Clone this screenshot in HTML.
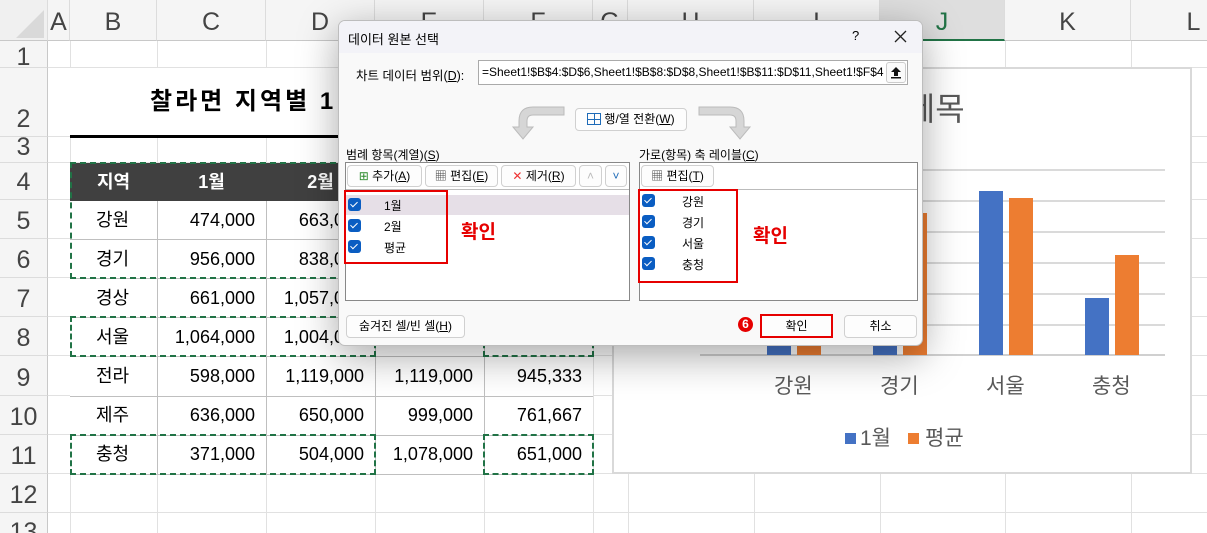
<!DOCTYPE html>
<html><head><meta charset="utf-8">
<style>
*{margin:0;padding:0;box-sizing:border-box}
html,body{width:1207px;height:533px;overflow:hidden}
body{background:#fff;position:relative;font-family:"Liberation Sans","Noto Sans CJK KR",sans-serif;color:#000}
.a{position:absolute}
.ch{position:absolute;top:0;height:41px;background:#f5f5f5;border-right:1px solid #dcdcdc;border-bottom:1px solid #c8c8c8;font-size:25px;color:#444;text-align:center;line-height:44px}
.rh{position:absolute;left:0;width:48px;background:#f5f5f5;border-right:1px solid #c8c8c8;border-bottom:1px solid #dcdcdc;font-size:25px;color:#444;text-align:center;display:flex;align-items:flex-end;justify-content:center;padding-bottom:2px}
.vl{position:absolute;top:41px;bottom:0;width:1px;background:#e1e1e1}
.hl{position:absolute;left:48px;right:0;height:1px;background:#e1e1e1}
.c{position:absolute;font-size:18px;line-height:20px;white-space:nowrap}
.r{text-align:right}
.dash{position:absolute;border:2px dashed #217346}
.dlg{position:absolute;left:338px;top:20px;width:585px;height:326px;background:#f9f9f9;border:1px solid #bdbdbd;border-radius:7px;box-shadow:0 10px 40px rgba(0,0,0,.35);font-size:12px;overflow:hidden}
.btn{position:absolute;background:#fdfdfd;border:1px solid #d0d0d0;border-radius:4px;font-size:12px;text-align:center;line-height:21px;white-space:nowrap}
.cb{position:absolute;width:13px;height:13px;background:#0a5dc2;border-radius:3px}
.cb:after{content:"";position:absolute;left:4px;top:2px;width:3px;height:6px;border:solid #fff;border-width:0 1px 1px 0;transform:rotate(45deg)}
.it{position:absolute;font-size:12px}
.red{position:absolute;border:2px solid #e60000}
.rt{position:absolute;color:#e60000;font-weight:bold;font-size:19px}
.gl{position:absolute;left:700px;width:465px;height:2px;background:#dadada}
.bar{position:absolute}
</style></head><body>
<div class="ch" style="left:0;width:48px;background:#f0f0f0"></div>
<svg class="a" style="left:10px;top:6px" width="36" height="34"><polygon points="34,4 34,32 6,32" fill="#d9d9d9"/></svg>
<div class="ch" style="left:48px;width:22px">A</div>
<div class="ch" style="left:70px;width:87px">B</div>
<div class="ch" style="left:157px;width:109px">C</div>
<div class="ch" style="left:266px;width:109px">D</div>
<div class="ch" style="left:375px;width:109px">E</div>
<div class="ch" style="left:484px;width:109px">F</div>
<div class="ch" style="left:593px;width:35px">G</div>
<div class="ch" style="left:628px;width:126px">H</div>
<div class="ch" style="left:754px;width:126px">I</div>
<div class="ch" style="left:880px;width:125px;background:#dedede;border-bottom:2px solid #217346;color:#217346">J</div>
<div class="ch" style="left:1005px;width:126px">K</div>
<div class="ch" style="left:1131px;width:126px">L</div>
<div class="rh" style="top:41px;height:27px;padding-bottom:0;line-height:20px">1</div>
<div class="rh" style="top:68px;height:69px">2</div>
<div class="rh" style="top:137px;height:26px;padding-bottom:0">3</div>
<div class="rh" style="top:163px;height:37px">4</div>
<div class="rh" style="top:200px;height:39px">5</div>
<div class="rh" style="top:239px;height:39px">6</div>
<div class="rh" style="top:278px;height:39px">7</div>
<div class="rh" style="top:317px;height:39px">8</div>
<div class="rh" style="top:356px;height:40px">9</div>
<div class="rh" style="top:396px;height:39px">10</div>
<div class="rh" style="top:435px;height:39px">11</div>
<div class="rh" style="top:474px;height:39px">12</div>
<div class="rh" style="top:513px;height:39px;align-items:flex-start;padding-top:5px">13</div>
<div class="vl" style="left:70px"></div><div class="vl" style="left:157px"></div><div class="vl" style="left:266px"></div><div class="vl" style="left:375px"></div><div class="vl" style="left:484px"></div><div class="vl" style="left:593px"></div><div class="vl" style="left:628px"></div><div class="vl" style="left:754px"></div><div class="vl" style="left:880px"></div><div class="vl" style="left:1005px"></div><div class="vl" style="left:1131px"></div>
<div class="hl" style="top:67px"></div><div class="hl" style="top:136px"></div><div class="hl" style="top:162px"></div><div class="hl" style="top:199px"></div><div class="hl" style="top:238px"></div><div class="hl" style="top:277px"></div><div class="hl" style="top:316px"></div><div class="hl" style="top:355px"></div><div class="hl" style="top:395px"></div><div class="hl" style="top:434px"></div><div class="hl" style="top:473px"></div><div class="hl" style="top:512px"></div>
<div class="a" style="left:70px;top:68px;width:523px;height:68px;background:#fff"></div>
<div class="c" style="left:150px;top:88px;font-size:24px;font-weight:bold;line-height:28px;letter-spacing:3px">찰라면 지역별 1</div>
<div class="a" style="left:70px;top:135px;width:523px;height:3px;background:#000"></div>
<div class="a" style="left:70px;top:163px;width:523px;height:38px;background:#404040"></div>
<div class="a" style="left:70px;top:201px;width:523px;height:273px;background:#fff"></div>
<div class="a" style="left:157px;top:201px;width:1px;height:273px;background:#bfbfbf"></div>
<div class="a" style="left:266px;top:201px;width:1px;height:273px;background:#bfbfbf"></div>
<div class="a" style="left:375px;top:201px;width:1px;height:273px;background:#bfbfbf"></div>
<div class="a" style="left:484px;top:201px;width:1px;height:273px;background:#bfbfbf"></div>
<div class="a" style="left:70px;top:239px;width:523px;height:1px;background:#bfbfbf"></div>
<div class="a" style="left:70px;top:278px;width:523px;height:1px;background:#bfbfbf"></div>
<div class="a" style="left:70px;top:317px;width:523px;height:1px;background:#bfbfbf"></div>
<div class="a" style="left:70px;top:356px;width:523px;height:1px;background:#bfbfbf"></div>
<div class="a" style="left:70px;top:396px;width:523px;height:1px;background:#bfbfbf"></div>
<div class="a" style="left:70px;top:435px;width:523px;height:1px;background:#bfbfbf"></div>
<div class="a" style="left:70px;top:474px;width:523px;height:1px;background:#bfbfbf"></div>
<div class="c" style="left:70px;width:87px;top:172px;text-align:center;color:#fff;font-weight:bold">지역</div>
<div class="c" style="left:157px;width:109px;top:172px;text-align:center;color:#fff;font-weight:bold">1월</div>
<div class="c" style="left:266px;width:109px;top:172px;text-align:center;color:#fff;font-weight:bold">2월</div>
<div class="c" style="left:375px;width:109px;top:172px;text-align:center;color:#fff;font-weight:bold">3월</div>
<div class="c" style="left:484px;width:109px;top:172px;text-align:center;color:#fff;font-weight:bold">평균</div>
<div class="c" style="left:96px;top:210px">강원</div><div class="c r" style="left:157px;width:98px;top:210px">474,000</div><div class="c r" style="left:266px;width:98px;top:210px">663,000</div>
<div class="c" style="left:96px;top:249px">경기</div><div class="c r" style="left:157px;width:98px;top:249px">956,000</div><div class="c r" style="left:266px;width:98px;top:249px">838,000</div>
<div class="c" style="left:96px;top:288px">경상</div><div class="c r" style="left:157px;width:98px;top:288px">661,000</div><div class="c r" style="left:266px;width:98px;top:288px">1,057,000</div>
<div class="c" style="left:96px;top:327px">서울</div><div class="c r" style="left:157px;width:98px;top:327px">1,064,000</div><div class="c r" style="left:266px;width:98px;top:327px">1,004,000</div>
<div class="c" style="left:96px;top:366px">전라</div><div class="c r" style="left:157px;width:98px;top:366px">598,000</div><div class="c r" style="left:266px;width:98px;top:366px">1,119,000</div><div class="c r" style="left:375px;width:98px;top:366px">1,119,000</div><div class="c r" style="left:484px;width:98px;top:366px">945,333</div>
<div class="c" style="left:96px;top:405px">제주</div><div class="c r" style="left:157px;width:98px;top:405px">636,000</div><div class="c r" style="left:266px;width:98px;top:405px">650,000</div><div class="c r" style="left:375px;width:98px;top:405px">999,000</div><div class="c r" style="left:484px;width:98px;top:405px">761,667</div>
<div class="c" style="left:96px;top:444px">충청</div><div class="c r" style="left:157px;width:98px;top:444px">371,000</div><div class="c r" style="left:266px;width:98px;top:444px">504,000</div><div class="c r" style="left:375px;width:98px;top:444px">1,078,000</div><div class="c r" style="left:484px;width:98px;top:444px">651,000</div>
<div class="dash" style="left:70px;top:162px;width:306px;height:117px"></div>
<div class="dash" style="left:70px;top:316px;width:306px;height:41px"></div>
<div class="dash" style="left:70px;top:434px;width:306px;height:41px"></div>
<div class="dash" style="left:483px;top:162px;width:111px;height:117px"></div>
<div class="dash" style="left:483px;top:316px;width:111px;height:41px"></div>
<div class="dash" style="left:483px;top:434px;width:111px;height:41px"></div>
<div class="a" style="left:612px;top:67px;width:580px;height:407px;background:#fff;border:2px solid #d9d9d9"></div>
<div class="c" style="left:838px;top:90px;font-size:32px;line-height:38px;color:#595959">차트 제목</div>
<div class="gl" style="top:169px"></div><div class="gl" style="top:200px"></div><div class="gl" style="top:231px"></div><div class="gl" style="top:262px"></div><div class="gl" style="top:293px"></div><div class="gl" style="top:324px"></div><div class="gl" style="top:354px;background:#d0d0d0"></div>
<div class="bar" style="left:767px;top:255px;width:24px;height:100px;background:#4472c4"></div>
<div class="bar" style="left:797px;top:230px;width:24px;height:125px;background:#ed7d31"></div>
<div class="bar" style="left:873px;top:235px;width:24px;height:120px;background:#4472c4"></div>
<div class="bar" style="left:903px;top:213px;width:24px;height:142px;background:#ed7d31"></div>
<div class="bar" style="left:979px;top:191px;width:24px;height:164px;background:#4472c4"></div>
<div class="bar" style="left:1009px;top:198px;width:24px;height:157px;background:#ed7d31"></div>
<div class="bar" style="left:1085px;top:298px;width:24px;height:57px;background:#4472c4"></div>
<div class="bar" style="left:1115px;top:255px;width:24px;height:100px;background:#ed7d31"></div>
<div class="c" style="left:774px;top:375px;font-size:21px;line-height:24px;color:#595959">강원</div>
<div class="c" style="left:880px;top:375px;font-size:21px;line-height:24px;color:#595959">경기</div>
<div class="c" style="left:986px;top:375px;font-size:21px;line-height:24px;color:#595959">서울</div>
<div class="c" style="left:1092px;top:375px;font-size:21px;line-height:24px;color:#595959">충청</div>
<div class="a" style="left:845px;top:433px;width:11px;height:11px;background:#4472c4"></div>
<div class="c" style="left:860px;top:427px;font-size:21px;line-height:24px;color:#595959">1월</div>
<div class="a" style="left:908px;top:433px;width:11px;height:11px;background:#ed7d31"></div>
<div class="c" style="left:925px;top:427px;font-size:21px;line-height:24px;color:#595959">평균</div>
<div class="dlg">
 <div class="a" style="left:0;top:0;width:585px;height:32px;background:#f3f3f8"></div>
 <div class="a" style="left:9px;top:8px;font-size:13px">데이터 원본 선택</div>
 <div class="a" style="left:513px;top:7px;font-size:13px">?</div>
 <svg class="a" style="left:555px;top:9px" width="13" height="13"><path d="M1 1L12 12M12 1L1 12" stroke="#222" stroke-width="1.3"/></svg>
 <div class="a" style="left:17px;top:44px;font-size:12.5px">차트 데이터 범위(<u>D</u>):</div>
 <div class="a" style="left:139px;top:39px;width:430px;height:25px;background:#fff;border:1px solid #aaa;font-size:12px;line-height:23px;padding-left:3px;white-space:nowrap;overflow:hidden">=Sheet1!$B$4:$D$6,Sheet1!$B$8:$D$8,Sheet1!$B$11:$D$11,Sheet1!$F$4</div>
 <div class="a" style="left:547px;top:41px;width:20px;height:21px;background:#fafafa;border:1px solid #ccc;border-radius:3px"></div>
 <svg class="a" style="left:551px;top:45px" width="12" height="13"><path d="M6 1L1 6H4V10H8V6H11Z" fill="#111"/><rect x="1" y="11" width="10" height="1.5" fill="#111"/></svg>
 <svg class="a" style="left:166px;top:84px" width="62" height="38"><path d="M59 2H28Q14 2 14 16V22H8L18 34L28 22H22V16Q22 10 28 10H59Z" fill="#d6d6d6" stroke="#bbb"/></svg>
 <svg class="a" style="left:358px;top:84px" width="62" height="38"><path d="M2 2H33Q47 2 47 16V22H53L43 34L33 22H39V16Q39 10 33 10H2Z" fill="#d6d6d6" stroke="#bbb"/></svg>
 <div class="btn" style="left:236px;top:87px;width:112px;height:23px"><span style="display:inline-block;width:14px;height:12px;border:1px solid #1e6bb8;margin-right:3px;vertical-align:-2px;background:linear-gradient(#1e6bb8,#1e6bb8) 0 5px/14px 1px no-repeat,linear-gradient(#1e6bb8,#1e6bb8) 6px 0/1px 12px no-repeat"></span>행/열 전환(<u>W</u>)</div>
 <div class="a" style="left:7px;top:125px;font-size:12px">범례 항목(계열)(<u>S</u>)</div>
 <div class="a" style="left:300px;top:125px;font-size:12px">가로(항목) 축 레이블(<u>C</u>)</div>
 <div class="a" style="left:6px;top:141px;width:285px;height:139px;background:#fff;border:1px solid #888"></div>
 <div class="a" style="left:7px;top:168px;width:283px;height:1px;background:#bbb"></div>
 <div class="btn" style="left:8px;top:144px;width:75px;height:22px"><span style="color:#2b8a2b">⊞</span> 추가(<u>A</u>)</div>
 <div class="btn" style="left:86px;top:144px;width:73px;height:22px"><span style="color:#444">▦</span> 편집(<u>E</u>)</div>
 <div class="btn" style="left:162px;top:144px;width:75px;height:22px"><span style="color:#e33">✕</span> 제거(<u>R</u>)</div>
 <div class="btn" style="left:240px;top:144px;width:23px;height:22px;color:#bbb">˄</div>
 <div class="btn" style="left:266px;top:144px;width:22px;height:22px;color:#1e6bb8">˅</div>
 <div class="a" style="left:7px;top:174px;width:283px;height:20px;background:#e6dfe7"></div>
 <div class="cb" style="left:9px;top:177px"></div><div class="it" style="left:45px;top:176px">1월</div>
 <div class="cb" style="left:9px;top:198px"></div><div class="it" style="left:45px;top:197px">2월</div>
 <div class="cb" style="left:9px;top:219px"></div><div class="it" style="left:45px;top:218px">평균</div>
 <div class="red" style="left:5px;top:169px;width:104px;height:74px"></div>
 <div class="rt" style="left:122px;top:196px">확인</div>
 <div class="a" style="left:300px;top:141px;width:279px;height:139px;background:#fff;border:1px solid #888"></div>
 <div class="a" style="left:301px;top:168px;width:277px;height:1px;background:#bbb"></div>
 <div class="btn" style="left:302px;top:144px;width:73px;height:22px"><span style="color:#444">▦</span> 편집(<u>T</u>)</div>
 <div class="cb" style="left:303px;top:173px"></div><div class="it" style="left:343px;top:172px">강원</div>
 <div class="cb" style="left:303px;top:194px"></div><div class="it" style="left:343px;top:193px">경기</div>
 <div class="cb" style="left:303px;top:215px"></div><div class="it" style="left:343px;top:214px">서울</div>
 <div class="cb" style="left:303px;top:236px"></div><div class="it" style="left:343px;top:235px">충청</div>
 <div class="red" style="left:299px;top:168px;width:100px;height:94px"></div>
 <div class="rt" style="left:414px;top:200px">확인</div>
 <div class="btn" style="left:7px;top:294px;width:119px;height:23px">숨겨진 셀/빈 셀(<u>H</u>)</div>
 <div class="a" style="left:399px;top:296px;width:15px;height:15px;border-radius:50%;background:#e60000;color:#fff;font-weight:bold;font-size:12px;text-align:center;line-height:15px">6</div>
 <div class="btn" style="left:421px;top:293px;width:73px;height:24px;border:2px solid #e60000;border-radius:0">확인</div>
 <div class="btn" style="left:505px;top:294px;width:73px;height:23px">취소</div>
</div>
</body></html>
